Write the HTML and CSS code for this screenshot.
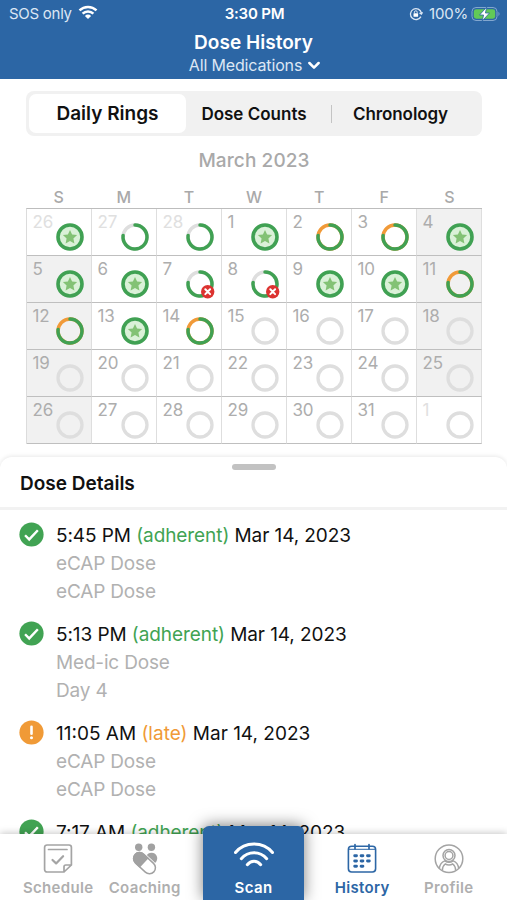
FILE: index.html
```html
<!DOCTYPE html>
<html lang="en">
<head>
<meta charset="utf-8">
<title>Dose History</title>
<link rel="stylesheet" href="styles.css">
</head>
<body>
<svg class="defs" width="0" height="0">
  <symbol id="full" viewBox="0 0 30 30"><circle cx="15" cy="15" r="12" fill="#daf1d8" stroke="#40a153" stroke-width="3.6"/><path d="M15 8l2.1 4.6 5 .5-3.7 3.4 1 4.900-4.400-2.500-4.400 2.500 1-4.900-3.700-3.400 5-.5z" fill="#83c275"/></symbol>
  <symbol id="part" viewBox="0 0 30 30"><circle cx="15" cy="15" r="12" fill="none" stroke="#dedede" stroke-width="3.400"/><path d="M15 3A12 12 0 1 1 3.100 13.500" fill="none" stroke="#40a153" stroke-width="3.500" stroke-linecap="round"/></symbol>
  <symbol id="late" viewBox="0 0 30 30"><circle cx="15" cy="15" r="12" fill="none" stroke="#f19a38" stroke-width="3.400"/><path d="M15 3A12 12 0 1 1 3.100 13.500" fill="none" stroke="#40a153" stroke-width="3.500" stroke-linecap="round"/></symbol>
  <symbol id="miss" viewBox="0 0 30 30"><use href="#part" width="30" height="30"/><circle cx="22.700" cy="22.700" r="6.700" fill="#dc3330"/><path d="M20.300 20.300l4.800 4.800m0-4.800l-4.800 4.800" stroke="#fff" stroke-width="2" stroke-linecap="round"/></symbol>
  <symbol id="none" viewBox="0 0 30 30"><circle cx="15" cy="15" r="12" fill="none" stroke="#dedede" stroke-width="3.300"/></symbol>
  <symbol id="ok" viewBox="0 0 26 26"><circle cx="13" cy="13" r="12.600" fill="#41a353"/><path d="M6.300 13.800l4.300 4.300 9-9.500" fill="none" stroke="#fff" stroke-width="2.500"/></symbol>
  <symbol id="warn" viewBox="0 0 26 26"><circle cx="13" cy="13" r="12.600" fill="#f09a37"/><path d="M13 7v7.300" stroke="#fff" stroke-width="2.700" stroke-linecap="round"/><circle cx="13" cy="18.400" r="1.600" fill="#fff"/></symbol>
</svg>
<div class="app">
  <header class="header">
    <div class="status">
      <div class="status-left"><span class="carrier">SOS only</span>
        <svg width="20" height="15" viewBox="0 0 20 15" fill="none" stroke="#fff" stroke-width="2.500"><path d="M1.500 5.400a12.200 12.200 0 0 1 17 0M4.600 8.700a7.800 7.800 0 0 1 10.800 0"/><path d="M10 14l-3.100-3.100a4.400 4.400 0 0 1 6.200 0z" fill="#fff" stroke="none"/></svg>
      </div>
      <span class="time">3:30 PM</span>
      <div class="status-right">
        <svg width="14" height="14" viewBox="0 0 14 14" fill="none" stroke="#dce7f4" stroke-width="1.300"><path d="M11.900 9.600a5.500 5.500 0 1 1 .5-3.600M13.500 5.200l-1.100 2-1.900-1.200"/><rect x="4.500" y="6.200" width="4.600" height="3.500" rx=".5" fill="#fff" stroke="none"/><path d="M5.400 6.400V5.200a1.400 1.400 0 0 1 2.800 0v1.200" stroke-width="1"/></svg>
        <span class="percent">100%</span>
        <svg class="battery" width="31" height="16" viewBox="0 0 31 16"><rect x="1" y="1.500" width="25" height="13" rx="4" fill="none" stroke="#83a7cf"/><rect x="2.800" y="3.300" width="21.400" height="9.400" rx="2.400" fill="#62c957"/><path d="M27.500 5.800q2 2.200 0 4.400z" fill="#83a7cf"/><path d="M15.800 1L8.500 9h4.100l-1.400 6 7.300-8h-4.100z" fill="#fff" stroke="#2c66a5" stroke-width=".8"/></svg>
      </div>
    </div>
    <h1>Dose History</h1>
    <div class="filter"><span>All Medications</span><svg width="12" height="9" viewBox="0 0 12 9"><path d="M1.400 2L6 6.600 10.600 2" fill="none" stroke="#fff" stroke-width="2.500" stroke-linecap="round" stroke-linejoin="round"/></svg></div>
  </header>
  <main class="calendar">
    <nav class="segments"><span class="segment active">Daily Rings</span><span class="segment counts">Dose Counts</span><i></i><span class="segment chrono">Chronology</span></nav>
    <h2>March 2023</h2>
    <div class="weekdays"><span>S</span><span>M</span><span>T</span><span>W</span><span>T</span><span>F</span><span>S</span></div>
    <div class="days">
      <div class="day out">26<svg><use href="#full"/></svg></div><div class="day out">27<svg><use href="#part"/></svg></div><div class="day out">28<svg><use href="#part"/></svg></div><div class="day">1<svg><use href="#full"/></svg></div><div class="day">2<svg><use href="#late"/></svg></div><div class="day">3<svg><use href="#late"/></svg></div><div class="day weekend">4<svg><use href="#full"/></svg></div>
      <div class="day weekend">5<svg><use href="#full"/></svg></div><div class="day">6<svg><use href="#full"/></svg></div><div class="day">7<svg><use href="#miss"/></svg></div><div class="day">8<svg><use href="#miss"/></svg></div><div class="day">9<svg><use href="#full"/></svg></div><div class="day">10<svg><use href="#full"/></svg></div><div class="day weekend">11<svg><use href="#late"/></svg></div>
      <div class="day weekend">12<svg><use href="#late"/></svg></div><div class="day">13<svg><use href="#full"/></svg></div><div class="day">14<svg><use href="#late"/></svg></div><div class="day">15<svg><use href="#none"/></svg></div><div class="day">16<svg><use href="#none"/></svg></div><div class="day">17<svg><use href="#none"/></svg></div><div class="day weekend">18<svg><use href="#none"/></svg></div>
      <div class="day weekend">19<svg><use href="#none"/></svg></div><div class="day">20<svg><use href="#none"/></svg></div><div class="day">21<svg><use href="#none"/></svg></div><div class="day">22<svg><use href="#none"/></svg></div><div class="day">23<svg><use href="#none"/></svg></div><div class="day">24<svg><use href="#none"/></svg></div><div class="day weekend">25<svg><use href="#none"/></svg></div>
      <div class="day weekend">26<svg><use href="#none"/></svg></div><div class="day">27<svg><use href="#none"/></svg></div><div class="day">28<svg><use href="#none"/></svg></div><div class="day">29<svg><use href="#none"/></svg></div><div class="day">30<svg><use href="#none"/></svg></div><div class="day">31<svg><use href="#none"/></svg></div><div class="day out">1<svg><use href="#none"/></svg></div>
    </div>
  </main>
  <section class="sheet">
    <div class="sheet-head"><div class="handle"></div><h3>Dose Details</h3></div>
    <div class="doses">
      <article class="dose"><svg><use href="#ok"/></svg><div><p class="when">5:45 PM <em>(adherent)</em> Mar 14, 2023</p><p>eCAP Dose</p><p>eCAP Dose</p></div></article>
      <article class="dose"><svg><use href="#ok"/></svg><div><p class="when">5:13 PM <em>(adherent)</em> Mar 14, 2023</p><p>Med-ic Dose</p><p>Day 4</p></div></article>
      <article class="dose"><svg><use href="#warn"/></svg><div><p class="when eleven">11:05 AM <em class="late">(late)</em> Mar 14, 2023</p><p>eCAP Dose</p><p>eCAP Dose</p></div></article>
      <article class="dose"><svg><use href="#ok"/></svg><div><p class="when">7:17 AM <em>(adherent)</em> Mar 14, 2023</p></div></article>
    </div>
  </section>
  <footer class="tabs">
    <div class="tab"><svg width="30" height="32" viewBox="0 0 30 32" fill="none" stroke="#a4a4a4" stroke-width="1.700" stroke-linecap="round" stroke-linejoin="round"><path d="M4 2h22a2.400 2.400 0 0 1 2.400 2.400V22L21 29H4a2.400 2.400 0 0 1-2.400-2.400V4.400A2.400 2.400 0 0 1 4 2zM21 29v-5.200q0-1.800 1.800-1.800h5.600M5.500 6.500h18.500"/><path d="M9.500 17l3.600 3.400 7-7.200" stroke-width="2.200"/></svg><span>Schedule</span></div>
    <div class="tab"><svg width="30" height="32" viewBox="0 0 30 32"><g fill="#a1a1a1"><circle cx="8.700" cy="4.200" r="3.700"/><circle cx="21.400" cy="4.200" r="3.700"/><path d="M15.500 14.500c1.500-3.500 3.200-4.800 6.200-4.800 4.500 0 7 4.800 4.600 8.800q-1 1.600-2.800 2.500z"/></g><g transform="rotate(43 14.500 19.500)"><rect x="2.200" y="14" width="25.500" height="12" rx="6" fill="#fff" stroke="#fff" stroke-width="3"/><rect x="2.200" y="14" width="25.500" height="12" rx="6" fill="#fff" stroke="#a1a1a1" stroke-width="1.500"/><path d="M14.500 13.300H8.200a6.700 6.700 0 0 0 0 13.400h6.300z" fill="#a1a1a1"/></g></svg><span>Coaching</span></div>
    <div class="tab scan"><svg width="42" height="28" viewBox="0 0 42 28" fill="none" stroke="#fff" stroke-width="3" stroke-linecap="round"><path d="M2.500 10.500C12-.8 30-.8 39.500 10.500M8.300 16.700c6.800-8 18.600-8 25.400 0M14.300 22.700c3.700-4.500 9.700-4.500 13.400 0"/></svg><span>Scan</span></div>
    <div class="tab active"><svg width="30" height="32" viewBox="0 0 30 32" fill="none" stroke="#2c66a5" stroke-linecap="round"><rect x="1.400" y="3.300" width="27.200" height="25.700" rx="3.200" stroke-width="1.600"/><path d="M8 1.500v4.200M22 1.500v4.200" stroke-width="1.700"/><path d="M2 6.300h26" stroke-width="1"/><path d="M7.700 12.700h1.800M14.100 12.700h1.800M20.500 12.700h1.800M7.700 18h1.800M14.100 18h1.800M20.500 18h1.800M7.700 23.300h1.800M14.100 23.300h1.800" stroke-width="2.900"/></svg><span>History</span></div>
    <div class="tab"><svg width="30" height="32" viewBox="0 0 30 32" fill="none" stroke="#a4a4a4" stroke-width="1.500"><circle cx="15" cy="15.700" r="13.800"/><circle cx="15" cy="12.500" r="6"/><circle cx="15" cy="12.500" r="3.900"/><path d="M5.300 25.400c.5-3.800 2.500-6.300 5.500-7.500 2.600 1.800 5.800 1.800 8.400 0 3 1.200 5 3.700 5.500 7.500M8.300 27.500c.1-3.200 1-5.100 2.900-6.500 2.600 1.300 5 1.300 7.600 0 1.900 1.400 2.800 3.300 2.900 6.500"/></svg><span>Profile</span></div>
  </footer>
</div>
</body>
</html>
```
FILE: styles.css
```css
* { box-sizing: border-box; }
body { margin: 0; background: #fff; font-family: Inter, "Liberation Sans", sans-serif; color: #111; }
h1, h2, h3, p { margin: 0; }
.defs { position: absolute; }
.app { width: 507px; height: 900px; display: flex; flex-direction: column; overflow: hidden; }
.header { height: 79px; background: #2c66a5; color: #fff; text-align: center; flex: none; }
.status { height: 28px; padding: 0 5px 0 9px; display: grid; grid-template-columns: 1fr auto 1fr; align-items: center; font-size: 15px; line-height: 28px; }
.status-left, .status-right { display: flex; align-items: center; color: #dce7f4; }
.status-left { gap: 6px; }
.status-left svg { margin-top: -3px; }
.status-right { justify-content: flex-end; }
.carrier { letter-spacing: -.27px; }
.time { font-weight: 600; letter-spacing: -.2px; margin-left: -2px; }
.percent { margin: 0 3px 0 6px; letter-spacing: -.2px; }
h1 { font-size: 19px; line-height: 28px; font-weight: 600; letter-spacing: .04px; padding-top: 1px; }
.filter { display: flex; justify-content: center; align-items: center; gap: 6px; font-size: 16px; line-height: 17px; letter-spacing: -.15px; color: #dce7f4; padding-left: 2px; }
.calendar { height: 378px; padding: 12px 25px 0 26px; flex: none; }
.segments { height: 45px; border-radius: 8px; background: #f1f1f1; display: flex; align-items: center; padding: 3px; font-weight: 600; font-size: 17px; }
.segment { text-align: center; }
.segment.active { width: 157px; height: 39px; line-height: 39px; background: #fff; border-radius: 7px; font-size: 19px; }
.counts { width: 136px; }
.segments i { width: 1px; height: 18px; background: #c4c4c4; margin-left: 9px; }
.chrono { width: 137px; letter-spacing: -.1px; }
h2 { margin-top: 12px; text-align: center; font-size: 19px; line-height: 26px; font-weight: 500; letter-spacing: .1px; color: #a9a9a9; }
.weekdays { display: grid; grid-template-columns: repeat(7, 1fr); margin-top: 13px; height: 21px; font-size: 16px; line-height: 20px; font-weight: 500; color: #a9a9a9; text-align: center; }
.days { display: grid; grid-template-columns: repeat(7, 1fr); grid-template-rows: repeat(5, 47.1px); border-top: 1px solid #bdbdbd; border-left: 1px solid #dcdcdc; }
.day { display: flex; justify-content: space-between; padding: 3px 6px 0 5.500px; font-size: 17px; line-height: 20px; letter-spacing: -.2px; color: #adadad; border-right: 1px solid #dedede; border-bottom: 1px solid #bfbfbf; }
.day svg { width: 30px; height: 30px; margin-top: 10px; flex: none; }
.weekend { background: #f1f1f1; }
.out { color: #e0e0e0; }
.sheet { flex: 1; min-height: 0; overflow: hidden; border-radius: 12px 12px 0 0; background: #fff; box-shadow: 0 -1px 4px rgba(0,0,0,.09); }
.sheet-head { height: 53px; border-bottom: 3px solid #f2f2f2; padding: 7px 20px 0; }
.handle { width: 44px; height: 6px; border-radius: 3px; margin: 0 auto; background: #c2c2c2; }
h3 { font-size: 19px; line-height: 26px; font-weight: 600; margin-top: 1px; }
.doses { padding: 12px 19px 0; display: grid; gap: 15px; }
.dose { display: flex; gap: 12px; font-size: 19px; line-height: 28px; letter-spacing: -.17px; color: #b1b1b1; }
.dose svg { width: 25px; height: 25px; flex: none; }
.when { color: #111; letter-spacing: -.08px; }
.when.eleven { letter-spacing: 0; }
.when em { font-style: normal; color: #41a353; }
.when em.late { color: #f09a37; }
.tabs { height: 66px; flex: none; background: #fff; display: flex; align-items: flex-end; padding: 0 15px; position: relative; box-shadow: 0 -1px 7px rgba(0,0,0,.22); font-size: 15px; font-weight: 600; color: #afafaf; }
.tab { height: 66px; width: 86.500px; display: flex; flex-direction: column; align-items: center; padding-top: 9px; line-height: 20px; letter-spacing: .35px; }
.tab svg { flex: none; }
.tab span { margin-top: 3px; }
.tab.scan { height: 74px; width: 101px; margin: 0 15px; background: #2c66a5; border-radius: 6px 6px 0 0; box-shadow: 0 -1px 15px rgba(0,0,0,.5); color: #fff; padding-top: 16px; }
.scan span { margin-top: 8px; }
.tab.active { color: #2c66a5; }
```
